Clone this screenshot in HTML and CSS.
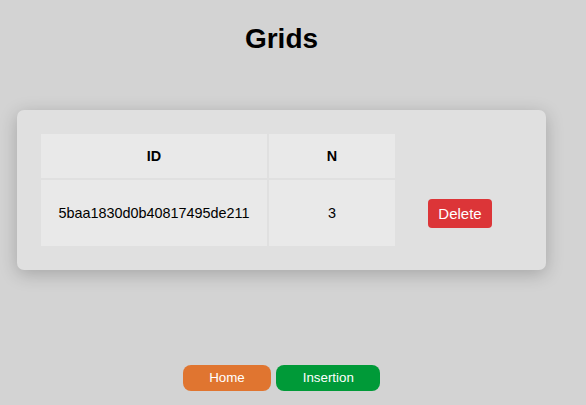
FILE: index.html
```html
<!DOCTYPE html>
<html>
<head>
<meta charset="utf-8">
<link rel="stylesheet" href="styles.css">
</head>
<body>
<div class="page">
  <h1 class="title">Grids</h1>
  <div class="card">
    <table class="grid">
      <thead>
        <tr>
          <th class="col-id">ID</th>
          <th class="col-n">N</th>
          <th class="col-act"></th>
        </tr>
      </thead>
      <tbody>
        <tr>
          <td class="col-id">5baa1830d0b40817495de211</td>
          <td class="col-n">3</td>
          <td class="col-act"><button class="btn-delete">Delete</button></td>
        </tr>
      </tbody>
    </table>
  </div>
  <nav class="nav">
    <a class="nav-btn home">Home</a>
    <a class="nav-btn insertion">Insertion</a>
  </nav>
</div>
</body>
</html>
```
FILE: styles.css
```css
html, body {
  margin: 0;
  padding: 0;
  background: #d3d3d3;
  font-family: "Liberation Sans", Arial, sans-serif;
  color: #000;
}
.page {
  width: 563px;
  padding-top: 23px;
}
.title {
  margin: 0;
  font-size: 28px;
  line-height: 32px;
  font-weight: bold;
  text-align: center;
}
.card {
  margin: 55px 17px 0 17px;
  padding: 22px;
  background: #e0e0e0;
  border-radius: 7px;
  box-shadow: 0 4px 18px rgba(0, 0, 0, 0.22);
}
.grid {
  border-collapse: separate;
  border-spacing: 2px;
  width: 485px;
  table-layout: fixed;
  font-size: 14.4px;
}
.grid th, .grid td {
  padding: 0;
  text-align: center;
}
.grid th {
  height: 44px;
  font-weight: bold;
}
.grid td {
  height: 66px;
}
.col-id { width: 226px; background: #e9e9e9; }
.col-n { width: 126px; background: #e9e9e9; }
.grid .col-act { width: 125px; background: transparent; }
.btn-delete {
  font-family: "Liberation Sans", Arial, sans-serif;
  font-size: 15px;
  color: #fff;
  background: #dc3538;
  border: none;
  border-radius: 4px;
  width: 64px;
  height: 29px;
  padding: 0;
  margin-left: 1px;
}
.nav {
  margin-top: 95px;
  display: flex;
  justify-content: center;
  gap: 5px;
}
.nav-btn {
  display: block;
  height: 26px;
  line-height: 26px;
  padding: 0 26.5px;
  border-radius: 8px;
  color: #fff;
  font-size: 13.33px;
}
.home { background: #e07530; }
.insertion { background: #009a38; }
```
